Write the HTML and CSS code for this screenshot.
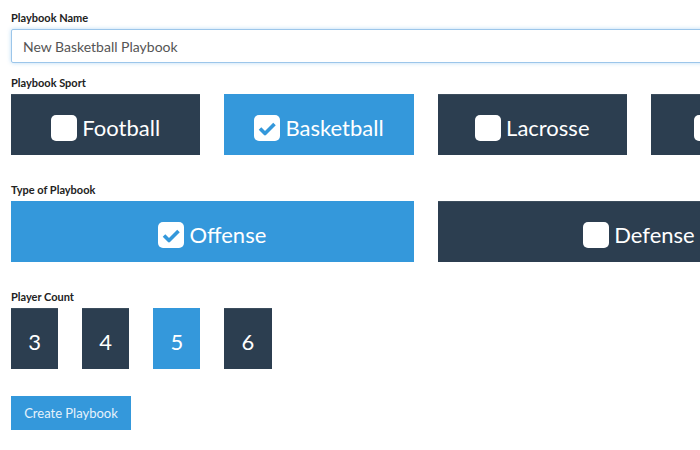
FILE: index.html
```html
<!DOCTYPE html>
<html lang="en">

<head>
  <meta charset="UTF-8">
  <meta name="viewport" content="width=device-width, initial-scale=1.0">
  <title>New Playbook</title>
  <link rel="stylesheet" href="styles.css">
</head>

<body>
  <form class="playbook-form">
    <!-- Name -->
    <div class="form-group">
      <label class="field-label" for="pb-name">Playbook Name</label>
      <input id="pb-name" class="text-input" type="text" value="New Basketball Playbook">
    </div>

    <!-- Sport -->
    <div class="form-group group-buttons">
      <label class="field-label">Playbook Sport</label>
      <div class="grid">
        <button type="button" class="choice span-3">
          <svg class="box" viewBox="0 0 26 26"><rect width="26" height="26" rx="5" fill="#fff"/></svg>Football
        </button>
        <button type="button" class="choice span-3 active">
          <svg class="box" viewBox="0 0 26 26"><rect width="26" height="26" rx="5" fill="#fff"/><path d="M6 13.5l5 5 9.5-9.5" fill="none" stroke="#3498db" stroke-width="3.6" stroke-linejoin="round"/></svg>Basketball
        </button>
        <button type="button" class="choice span-3">
          <svg class="box" viewBox="0 0 26 26"><rect width="26" height="26" rx="5" fill="#fff"/></svg>Lacrosse
        </button>
        <button type="button" class="choice span-3">
          <svg class="box" viewBox="0 0 26 26"><rect width="26" height="26" rx="5" fill="#fff"/></svg>Hockey
        </button>
      </div>
    </div>

    <!-- Type -->
    <div class="form-group group-buttons">
      <label class="field-label">Type of Playbook</label>
      <div class="grid">
        <button type="button" class="choice span-6 active">
          <svg class="box" viewBox="0 0 26 26"><rect width="26" height="26" rx="5" fill="#fff"/><path d="M6 13.5l5 5 9.5-9.5" fill="none" stroke="#3498db" stroke-width="3.6" stroke-linejoin="round"/></svg>Offense
        </button>
        <button type="button" class="choice span-6">
          <svg class="box" viewBox="0 0 26 26"><rect width="26" height="26" rx="5" fill="#fff"/></svg>Defense
        </button>
      </div>
    </div>

    <!-- Players -->
    <div class="form-group group-buttons">
      <label class="field-label">Player Count</label>
      <div class="grid">
        <button type="button" class="choice span-1">3</button>
        <button type="button" class="choice span-1">4</button>
        <button type="button" class="choice span-1 active">5</button>
        <button type="button" class="choice span-1">6</button>
      </div>
    </div>

    <button type="submit" class="submit-btn">Create Playbook</button>
  </form>
</body>

</html>
```

FILE: styles.css
```css
:root {
  --dark: #2c3e50;
  --blue: #3498db;
  --text: #333;
}

html, body {
  overflow: hidden;
}

body {
  margin: 0;
  background: #fff;
  font-family: Lato, "Open Sans", sans-serif;
  color: var(--text);
}

.playbook-form {
  width: 830px;
  padding: 10px 11px;
}

/* Labels + groups */
.form-group {
  margin-bottom: 12px;
}

.form-group.group-buttons {
  margin-bottom: 27px;
}

.field-label {
  display: block;
  font-size: 11px;
  font-weight: bold;
  line-height: 15px;
  margin-bottom: 4px;
  color: #222;
}

.text-input {
  display: block;
  box-sizing: border-box;
  width: 100%;
  height: 34px;
  padding: 0 11px;
  font-family: inherit;
  font-size: 14px;
  color: #555;
  border: 1px solid #9cc6ea;
  border-radius: 2px;
  box-shadow: 0 0 4px rgba(102, 175, 233, 0.45);
  outline: none;
}

/* 12 column grid */
.grid {
  display: grid;
  grid-template-columns: repeat(12, 47.3px);
  column-gap: 23.8px;
}

.span-1 { grid-column: span 1; }
.span-3 { grid-column: span 3; }
.span-6 { grid-column: span 6; }

.choice {
  box-sizing: border-box;
  height: 61px;
  display: flex;
  justify-content: center;
  align-items: center;
  gap: 5px;
  padding: 6px 0 0;
  border: none;
  border-radius: 0;
  background: var(--dark);
  color: #fff;
  font-family: inherit;
  font-size: 22px;
  cursor: pointer;
  box-shadow: inset 0 1px 0 rgba(255, 255, 255, 0.08);
}

.choice.active {
  background: var(--blue);
  box-shadow: none;
}

.choice .box {
  width: 26px;
  height: 26px;
  flex-shrink: 0;
}

.submit-btn {
  display: block;
  margin-top: 2px;
  width: 120px;
  height: 34px;
  padding: 0;
  border: none;
  border-radius: 0;
  background: var(--blue);
  color: #e6f2fb;
  font-family: inherit;
  font-size: 13px;
  cursor: pointer;
}
```
